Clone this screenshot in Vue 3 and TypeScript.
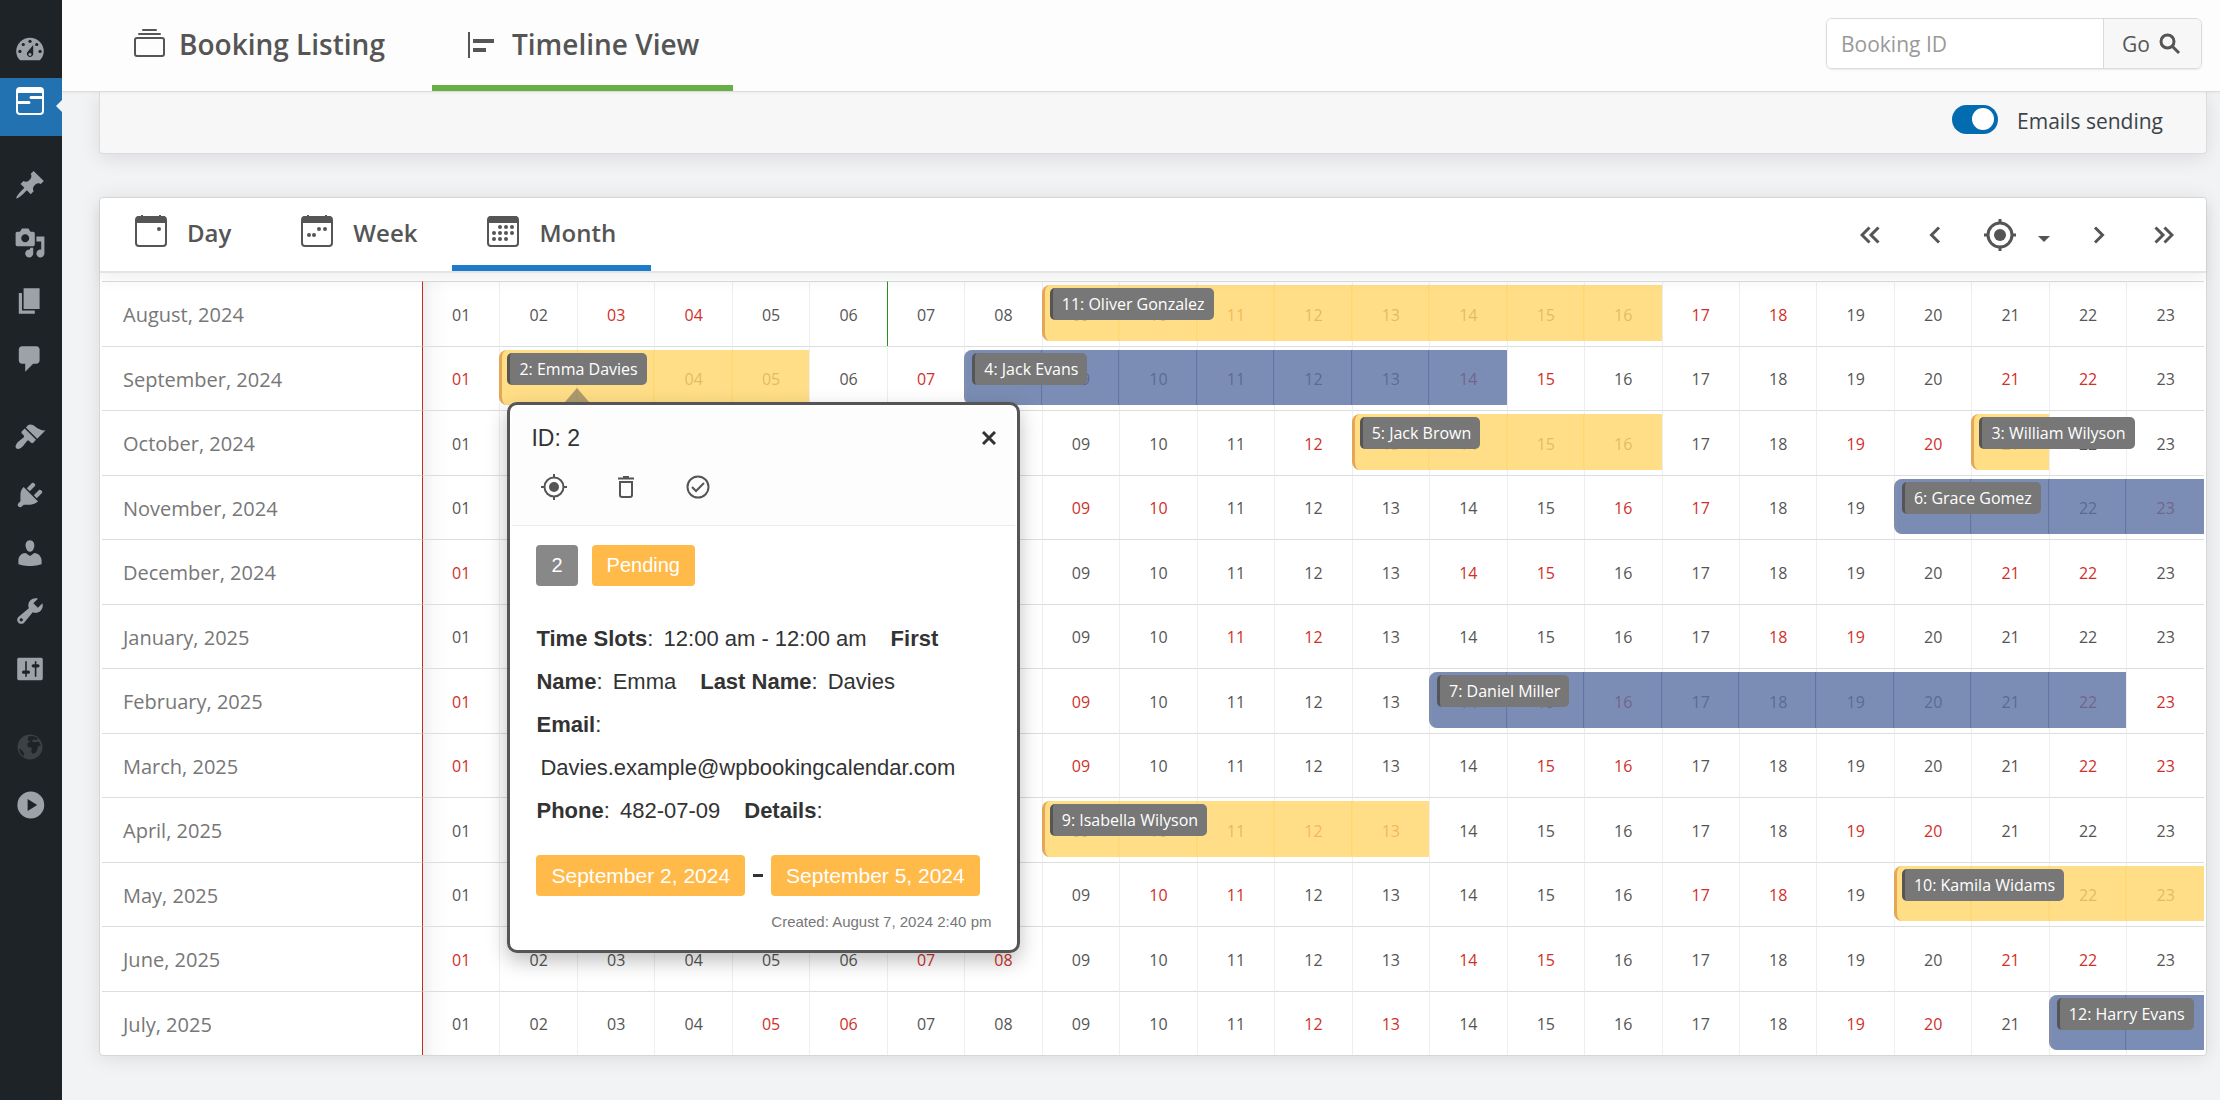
<script setup lang="ts">
import { ref } from 'vue'

interface Booking {
  id: number
  name: string
  year: number
  month: number
  from: number
  to: number
  status: 'pending' | 'approved'
}

interface DayCell {
  day: number
  weekend: boolean
  today: boolean
  booking?: Booking
  first: boolean
}

interface MenuItem {
  label: string
  icon: string
  gap?: boolean
}

const DAYS_SHOWN = 23
const MONTH_NAMES = ['January', 'February', 'March', 'April', 'May', 'June', 'July', 'August', 'September', 'October', 'November', 'December']

const bookings: Booking[] = [
  { id: 11, name: 'Oliver Gonzalez', year: 2024, month: 7, from: 9, to: 16, status: 'pending' },
  { id: 2, name: 'Emma Davies', year: 2024, month: 8, from: 2, to: 5, status: 'pending' },
  { id: 4, name: 'Jack Evans', year: 2024, month: 8, from: 8, to: 14, status: 'approved' },
  { id: 5, name: 'Jack Brown', year: 2024, month: 9, from: 13, to: 16, status: 'pending' },
  { id: 3, name: 'William Wilyson', year: 2024, month: 9, from: 21, to: 21, status: 'pending' },
  { id: 6, name: 'Grace Gomez', year: 2024, month: 10, from: 20, to: 30, status: 'approved' },
  { id: 7, name: 'Daniel Miller', year: 2025, month: 1, from: 14, to: 22, status: 'approved' },
  { id: 9, name: 'Isabella Wilyson', year: 2025, month: 3, from: 9, to: 13, status: 'pending' },
  { id: 10, name: 'Kamila Widams', year: 2025, month: 4, from: 20, to: 30, status: 'pending' },
  { id: 12, name: 'Harry Evans', year: 2025, month: 6, from: 22, to: 30, status: 'approved' },
]

const rows = Array.from({ length: 12 }, (_, i) => {
  const month = (7 + i) % 12
  const year = 2024 + Math.floor((7 + i) / 12)
  const cells: DayCell[] = Array.from({ length: DAYS_SHOWN }, (_, d) => {
    const day = d + 1
    const weekday = new Date(year, month, day).getDay()
    const booking = bookings.find(b => b.year === year && b.month === month && day >= b.from && day <= b.to)
    return {
      day,
      weekend: weekday === 0 || weekday === 6,
      today: year === 2024 && month === 7 && day === 7,
      booking,
      first: booking?.from === day,
    }
  })
  return { label: `${MONTH_NAMES[month]}, ${year}`, cells }
})

const pad = (n: number) => String(n).padStart(2, '0')

const menuTop: MenuItem[] = [
  { label: 'Posts', gap: true, icon: 'M10.44 3.02l1.82-1.82 6.36 6.35-1.83 1.82c-1.05-.68-2.48-.57-3.41.36l-.75.75c-.92.93-1.04 2.35-.35 3.41l-1.83 1.82-2.41-2.41-2.8 2.79c-.42.42-3.38 2.71-3.8 2.29s1.86-3.39 2.28-3.81l2.79-2.79L4.1 9.36l1.83-1.82c1.05.69 2.48.57 3.4-.36l.75-.75c.93-.92 1.05-2.35.36-3.41z' },
  { label: 'Media', icon: 'M13 11V4c0-.55-.45-1-1-1h-1.67L9 1H5L3.67 3H2c-.55 0-1 .45-1 1v7c0 .55.45 1 1 1h10c.55 0 1-.45 1-1zM7 4.5c1.38 0 2.5 1.12 2.5 2.5S8.38 9.5 7 9.5 4.5 8.38 4.5 7 5.62 4.5 7 4.5zM14 6h5v10.5c0 1.38-1.12 2.5-2.5 2.5S14 17.88 14 16.5s1.12-2.5 2.5-2.5c.17 0 .34.02.5.05V9h-3V6zm-4 8.05V13h2v3.5c0 1.38-1.12 2.5-2.5 2.5S7 17.88 7 16.5 8.12 14 9.5 14c.17 0 .34.02.5.05z' },
  { label: 'Pages', icon: 'M6 15V2h10v13H6zm-1 1h8v2H3V5h2v11z' },
  { label: 'Comments', icon: 'M5 2h9c1.1 0 2 .9 2 2v7c0 1.1-.9 2-2 2h-2l-5 5v-5H5c-1.1 0-2-.9-2-2V4c0-1.1.9-2 2-2z' },
  { label: 'Appearance', gap: true, icon: 'M14.48 11.06L7.41 3.99l1.5-1.5c.5-.56 2.3-.47 3.51.32 1.21.8 1.43 1.28 2.91 2.1 1.18.64 2.45 1.26 4.45.85zm-.71.71L6.7 4.7 4.93 6.47c-.39.39-.39 1.02 0 1.41l1.06 1.06c.39.39.39 1.03 0 1.42-.6.6-1.43 1.11-2.21 1.69-.35.26-.7.53-1.01.84C1.43 14.23.4 16.08 1.4 17.07c.99 1 2.84-.03 4.18-1.36.31-.31.58-.66.85-1.02.57-.78 1.08-1.61 1.69-2.21.39-.39 1.02-.39 1.41 0l1.06 1.06c.39.39 1.02.39 1.41 0z' },
  { label: 'Plugins', icon: 'M13.11 4.36L9.87 7.6 8 5.73l3.24-3.24c.35-.34 1.05-.2 1.56.32.52.51.66 1.21.31 1.55zm-8 1.77l.91-1.12 9.01 9.01-1.19.84c-.71.71-2.63 1.16-3.82 1.16H6.14L4.9 17.26c-.59.59-1.54.59-2.12 0-.59-.58-.59-1.53 0-2.12l1.24-1.24v-3.88c0-1.13.4-3.19 1.09-3.89zm7.26 3.97l3.24-3.24c.34-.35 1.04-.21 1.55.31.52.51.66 1.21.31 1.55l-3.24 3.25z' },
  { label: 'Users', icon: 'M10 9.25c-2.27 0-2.73-3.44-2.73-3.44C7 4.02 7.82 2 9.97 2c2.16 0 2.98 2.02 2.71 3.81 0 0-.41 3.44-2.68 3.44zm0 2.57L12.72 10c2.39 0 4.52 2.33 4.52 4.53v2.49s-3.65 1.13-7.24 1.13c-3.65 0-7.24-1.13-7.24-1.13v-2.49c0-2.25 1.94-4.48 4.47-4.48z' },
  { label: 'Tools', icon: 'M16.68 9.77c-1.34 1.34-3.3 1.67-4.95.99l-5.41 6.52c-.99.99-2.59.99-3.58 0s-.99-2.59 0-3.57l6.52-5.42c-.68-1.65-.35-3.61.99-4.95 1.28-1.28 3.12-1.62 4.72-1.06l-2.89 2.89 2.82 2.82 2.86-2.87c.53 1.58.18 3.39-1.08 4.65zM3.81 16.21c.4.39 1.04.39 1.43 0 .4-.4.4-1.04 0-1.43-.39-.4-1.03-.4-1.43 0-.39.39-.39 1.03 0 1.43z' },
  { label: 'Settings', icon: 'M18 16V4c0-.55-.45-1-1-1H3c-.55 0-1 .45-1 1v12c0 .55.45 1 1 1h14c.55 0 1-.45 1-1zM8 11h1c.55 0 1 .45 1 1s-.45 1-1 1H8v1.5c0 .28-.22.5-.5.5s-.5-.22-.5-.5V13H6c-.55 0-1-.45-1-1s.45-1 1-1h1V5.5c0-.28.22-.5.5-.5s.5.22.5.5V11zm5-2h-1c-.55 0-1-.45-1-1s.45-1 1-1h1V5.5c0-.28.22-.5.5-.5s.5.22.5.5V7h1c.55 0 1 .45 1 1s-.45 1-1 1h-1v5.5c0 .28-.22.5-.5.5s-.5-.22-.5-.5V9z' },
]

const calendarDots = {
  day: [[24, 14]],
  week: [[8, 20], [13, 20], [18, 14], [24, 14]],
  month: [[13, 12], [19, 12], [25, 12], [7, 18], [13, 18], [19, 18], [25, 18], [7, 24], [13, 24], [19, 24]],
}

const views = [
  { key: 'day', label: 'Day' },
  { key: 'week', label: 'Week' },
  { key: 'month', label: 'Month' },
] as const

const activeView = ref<'day' | 'week' | 'month'>('month')
const openBooking = ref<number | null>(2)
const emails = ref(true)
const bookingId = ref('')
</script>

<template>
  <div class="app">
    <nav class="sidebar" aria-label="Admin menu">
      <a href="#" class="item" aria-label="Dashboard">
        <svg viewBox="0 0 20 20" class="icon">
          <path d="M3.8 17h12.4A8.6 8.6 0 0 0 18.6 11.5a8.6 8.6 0 0 0-17.2 0c0 2.2.9 4.200 2.400 5.500z" />
          <g class="hole">
            <circle cx="10" cy="5.200" r="1" /><circle cx="5.800" cy="7.200" r="1" /><circle cx="14.200" cy="7.200" r="1" />
            <circle cx="3.700" cy="11.500" r="1" /><circle cx="16.300" cy="11.500" r="1" />
            <path d="M12 7.500v5.800a2 2 0 1 1-3.600-1.500z" />
          </g>
          <circle cx="10" cy="13.400" r=".9" />
        </svg>
      </a>
      <a href="#" class="item current" aria-label="Booking Calendar">
        <svg viewBox="0 0 28 28" class="logo">
          <rect class="line" x="1" y="1" width="26" height="26" rx="3" />
          <path d="M1 3a2 2 0 0 1 2-2h22a2 2 0 0 1 2 2v3H1z" />
          <path d="M15 10.500h12M1 15.500h12" stroke="currentColor" stroke-width="3" stroke-linecap="round" />
        </svg>
      </a>
      <a v-for="item in menuTop" :key="item.label" href="#" class="item" :class="{ gap: item.gap }" :aria-label="item.label">
        <svg viewBox="0 0 20 20" class="icon"><path :d="item.icon" /></svg>
      </a>
      <a href="#" class="item gap dim" aria-label="Site">
        <svg viewBox="0 0 20 20" class="icon">
          <circle cx="10" cy="10" r="7.800" />
          <path class="hole" d="M9 3.500c2-.8 4.500-.3 6 1.200l-1 1-2-.4-1 1.200 2 .6 2.500-.4 1.400 2.300-1.700.6-1.200 3.300-2 1.700-1.200-1.500.3-2.500-2.600-.8-.2-2 2-1.400-1.800-.6zM3 11l2 1 1.500 2.300-.8 1.500A8 8 0 0 1 3 11z" />
        </svg>
      </a>
      <a href="#" class="item" aria-label="Collapse menu">
        <svg viewBox="0 0 20 20" class="icon play">
          <circle cx="10.500" cy="10" r="8.400" /><path class="hole" d="M8.500 6.200v7.600l6-3.800z" />
        </svg>
      </a>
    </nav>

    <div class="page">
      <header class="topbar">
        <nav class="toptabs" aria-label="Sections">
          <a href="#" class="toptab">
            <svg width="34" height="34" viewBox="0 0 34 34" class="stroke thin">
              <rect x="2" y="11" width="29" height="18" rx="2" /><path d="M6 7h21M10 3h13" stroke-linecap="round" />
            </svg>
            <span>Booking Listing</span>
          </a>
          <a href="#" class="toptab active">
            <svg width="34" height="34" viewBox="0 0 34 34">
              <path d="M2 5h2v26H2zM7 12h21v4H7zM7 21h13v4H7z" />
            </svg>
            <span>Timeline View</span>
          </a>
        </nav>
        <form class="search" @submit.prevent>
          <input v-model="bookingId" type="text" placeholder="Booking ID" aria-label="Booking ID" />
          <button type="submit">
            Go
            <svg width="22" height="22" viewBox="0 0 22 22" class="stroke">
              <circle cx="8.500" cy="8.500" r="6.500" /><path d="M13 13l7 7" />
            </svg>
          </button>
        </form>
      </header>

      <main class="content">
        <section class="options">
          <label class="switch">
            <input v-model="emails" type="checkbox" />
            <span>Emails sending</span>
          </label>
        </section>

        <section class="timeline">
          <div class="toolbar">
            <div class="views">
              <button v-for="v in views" :key="v.key" type="button" class="view" :class="{ active: activeView === v.key }" @click="activeView = v.key">
                <svg width="32" height="32" viewBox="0 0 32 32">
                  <rect class="line" x="1" y="2" width="30" height="29" rx="3" />
                  <path d="M1 4a3 3 0 0 1 3-3h24a3 3 0 0 1 3 3v4H1z" />
                  <path v-if="v.key !== 'month'" d="M6 0h2v2H6zM24 0h2v2h-2z" />
                  <circle v-for="(dot, i) in calendarDots[v.key]" :key="i" :cx="dot[0]" :cy="dot[1]" r="2" />
                </svg>
                <span>{{ v.label }}</span>
              </button>
            </div>
            <div class="pager">
              <button type="button" aria-label="Back far">
                <svg width="20" height="18" viewBox="0 0 20 18" class="stroke"><path d="M9.500 1.500L2 9l7.500 7.500M18.500 1.500L11 9l7.500 7.500" /></svg>
              </button>
              <button type="button" aria-label="Back">
                <svg width="12" height="18" viewBox="0 0 12 18" class="stroke"><path d="M10 1.500L2.500 9l7.500 7.500" /></svg>
              </button>
              <button type="button" aria-label="Today">
                <svg width="32" height="32" viewBox="0 0 32 32" class="stroke">
                  <circle cx="16" cy="16" r="12" /><path d="M16 0v4M16 28v4M0 16h4M28 16h4" /><circle class="dot" cx="16" cy="16" r="6" />
                </svg>
              </button>
              <button type="button" class="caret" aria-label="Choose date">
                <svg width="12" height="6" viewBox="0 0 12 6"><path d="M0 0h12L6 6z" /></svg>
              </button>
              <button type="button" aria-label="Forward">
                <svg width="12" height="18" viewBox="0 0 12 18" class="stroke"><path d="M2 1.500L9.500 9 2 16.500" /></svg>
              </button>
              <button type="button" aria-label="Forward far">
                <svg width="20" height="18" viewBox="0 0 20 18" class="stroke"><path d="M1.500 1.500L9 9l-7.500 7.500M10.500 1.500L18 9l-7.500 7.500" /></svg>
              </button>
            </div>
          </div>

          <table class="grid">
            <colgroup>
              <col class="month-col" />
              <col v-for="n in DAYS_SHOWN" :key="n" />
            </colgroup>
            <tbody>
              <tr v-for="row in rows" :key="row.label">
                <th scope="row">{{ row.label }}</th>
                <td v-for="cell in row.cells" :key="cell.day" :class="{ weekend: cell.weekend, today: cell.today }">
                  {{ pad(cell.day) }}
                  <template v-if="cell.booking">
                    <div class="bar" :class="[cell.booking.status, { first: cell.first }]"></div>
                    <button v-if="cell.first" type="button" class="chip" @click="openBooking = cell.booking.id">
                      {{ cell.booking.id }}: {{ cell.booking.name }}
                    </button>
                  </template>
                  <div v-if="cell.first && cell.booking?.id === 2 && openBooking === 2" class="popup" role="dialog" aria-label="Booking 2">
                    <div class="popup-head">
                      <div class="popup-title">
                        <span>ID: 2</span>
                        <button type="button" aria-label="Close" @click="openBooking = null">
                          <svg width="14" height="14" viewBox="0 0 14 14" class="stroke"><path d="M1 1l12 12M13 1L1 13" /></svg>
                        </button>
                      </div>
                      <div class="popup-actions">
                        <button type="button" aria-label="Locate">
                          <svg width="26" height="26" viewBox="0 0 26 26" class="stroke thin">
                            <circle cx="13" cy="13" r="9.500" /><path d="M13 0v4M13 22v4M0 13h4M22 13h4" /><circle class="dot" cx="13" cy="13" r="5" />
                          </svg>
                        </button>
                        <button type="button" aria-label="Delete">
                          <svg width="16" height="22" viewBox="0 0 16 22" class="stroke thin">
                            <path d="M2 6v13a2 2 0 0 0 2 2h8a2 2 0 0 0 2-2V6z" /><path d="M0 2.500h16M5 1h6" />
                          </svg>
                        </button>
                        <button type="button" aria-label="Approve">
                          <svg width="24" height="24" viewBox="0 0 24 24" class="stroke thin">
                            <circle cx="12" cy="12" r="10.500" /><path d="M6 12l4 4 8-8" />
                          </svg>
                        </button>
                      </div>
                    </div>
                    <div class="popup-body">
                      <div class="labels">
                        <span class="badge gray">2</span>
                        <span class="badge">Pending</span>
                      </div>
                      <p class="fields">
                        <b>Time Slots</b>: <span class="val">12:00 am - 12:00 am</span>
                        <b>First<br />Name</b>: <span class="val">Emma</span>
                        <b>Last Name</b>: <span class="val">Davies</span><br />
                        <b>Email</b>:<br />
                        <span class="val">Davies.example@wpbookingcalendar.com</span><br />
                        <b>Phone</b>: <span class="val">482-07-09</span>
                        <b>Details</b>:
                      </p>
                      <div class="dates">
                        <span class="badge date">September 2, 2024</span>
                        <span class="dash"></span>
                        <span class="badge date">September 5, 2024</span>
                      </div>
                      <p class="created">Created: August 7, 2024 2:40 pm</p>
                    </div>
                  </div>
                </td>
              </tr>
            </tbody>
          </table>
        </section>
      </main>
    </div>
  </div>
</template>

<style>
body {
  background: #f2f3f5;
}
</style>

<style scoped>
* {
  box-sizing: border-box;
}
.app {
  display: flex;
  min-height: 100vh;
  font-family: 'Open Sans', 'Noto Sans', sans-serif;
  color: #555;
}
button {
  font: inherit;
  color: inherit;
  background: none;
  border: 0;
  padding: 0;
  cursor: pointer;
}
a {
  color: inherit;
  text-decoration: none;
}
svg {
  display: block;
  fill: currentColor;
  flex: none;
}
.stroke {
  fill: none;
  stroke: currentColor;
  stroke-width: 3;
}
.stroke.thin,
.line {
  stroke-width: 2;
}
.line {
  fill: none;
  stroke: currentColor;
}
.stroke .dot {
  fill: currentColor;
  stroke: none;
}

/* admin menu */
.sidebar {
  flex: none;
  width: 62px;
  padding-top: 20px;
  background: #1d2327;
  color: #9ca2a7;
}
.item {
  display: flex;
  align-items: center;
  justify-content: center;
  height: 58px;
  padding-right: 2px;
}
.item.gap {
  margin-top: 20px;
}
.item .icon {
  width: 32px;
  height: 32px;
}
.item .hole {
  fill: #1d2327;
}
.item.current {
  position: relative;
  color: #fff;
  background: #2271b1;
  padding-bottom: 12px;
}
.item.current::after {
  content: '';
  position: absolute;
  right: 0;
  top: 22px;
  border: 6px solid transparent;
  border-right-color: #f2f3f5;
  border-left: 0;
}
.logo {
  width: 28px;
  height: 28px;
}
.item.dim {
  color: #3e4143;
}

/* top bar */
.page {
  flex: 1;
  min-width: 0;
}
.topbar {
  position: relative;
  z-index: 1;
  display: flex;
  justify-content: space-between;
  align-items: center;
  height: 92px;
  padding: 0 18px 0 37px;
  background: #fdfdfd;
  border-bottom: 1px solid #dcdcde;
  box-shadow: 0 1px 3px rgba(0, 0, 0, 0.05);
}
.toptabs {
  display: flex;
  gap: 13px;
  height: 91px;
}
.toptab {
  display: flex;
  align-items: center;
  gap: 12px;
  padding: 2px 34px 0;
  font-size: 28px;
  font-weight: 600;
  border-bottom: 6px solid transparent;
  white-space: nowrap;
}
.toptab.active {
  border-bottom-color: #64b044;
}
.search {
  display: flex;
  width: 376px;
  height: 51px;
  margin-bottom: 4px;
  font-size: 21px;
  border: 1px solid #d9dadc;
  border-radius: 6px;
  box-shadow: 0 1px 2px rgba(0, 0, 0, 0.08);
  overflow: hidden;
}
.search input {
  flex: 1;
  min-width: 0;
  padding: 0 14px;
  font: inherit;
  color: #555;
  background: #fff;
  border: 0;
}
.search input::placeholder {
  color: #999;
}
.search button {
  display: flex;
  align-items: center;
  gap: 9px;
  padding: 0 20px 0 18px;
  background: #f7f7f7;
  border-left: 1px solid #d9dadc;
}

/* panels */
.content {
  padding: 0 13px 45px 37px;
}
.options {
  display: flex;
  justify-content: flex-end;
  height: 62px;
  padding: 11px 43px 0 0;
  background: #f7f7f7;
  border: 1px solid #dcdcde;
  border-top: 0;
  border-radius: 0 0 4px 4px;
  box-shadow: 0 4px 20px rgba(0, 0, 0, 0.1);
}
.switch {
  display: flex;
  align-items: center;
  gap: 19px;
  height: 36px;
  font-size: 21px;
  color: #3c434a;
}
.switch input {
  appearance: none;
  width: 46px;
  height: 29px;
  margin: 0 0 4px;
  padding: 3px 4px;
  border-radius: 15px;
  background: #999;
}
.switch input:checked {
  background: #036cb0;
}
.switch input::before {
  content: '';
  display: block;
  width: 22px;
  height: 22px;
  border-radius: 50%;
  background: #fff;
}
.switch input:checked::before {
  margin-left: auto;
}
.timeline {
  margin-top: 43px;
  background: #fff;
  border: 1px solid #d5d6d8;
  border-radius: 4px;
  box-shadow: 0 2px 20px rgba(0, 0, 0, 0.1);
}
.toolbar {
  position: relative;
  z-index: 1;
  display: flex;
  justify-content: space-between;
  height: 75px;
  padding-right: 10px;
  background: #fff;
  border-bottom: 2px solid #e3e4e5;
  border-radius: 4px 4px 0 0;
  box-shadow: 0 8px 14px rgba(0, 0, 0, 0.05);
}
.views {
  display: flex;
}
.view {
  display: flex;
  align-items: center;
  gap: 20px;
  padding: 2px 35px 0;
  font-size: 24px;
  font-weight: 600;
  border-bottom: 6px solid transparent;
}
.view svg {
  margin-bottom: 4px;
}
.view.active {
  border-bottom-color: #1e7acb;
}
.pager {
  display: flex;
}
.pager button {
  display: flex;
  align-items: center;
  justify-content: center;
  width: 65px;
}
.pager .caret {
  width: 24px;
  margin-right: 10px;
  padding-top: 8px;
}

/* month rows */
.grid {
  width: calc(100% - 4px);
  height: 774px;
  margin: 8px 2px 0;
  table-layout: fixed;
  border-collapse: separate;
  border-spacing: 0;
}
.month-col {
  width: 320px;
}
.grid th,
.grid td {
  padding: 2px 0 0;
  border-top: 1px solid #dcddde;
}
.grid th {
  padding-left: 21px;
  font-size: 20px;
  font-weight: 400;
  color: #777;
  text-align: left;
}
.grid td {
  position: relative;
  font-size: 16px;
  text-align: center;
  border-left: 1px solid #eeeeef;
}
.grid th + td {
  border-left-color: #c52b20;
  background: linear-gradient(to right, #efefef, #fafafa 10px, #fff 26px);
}
.grid td.weekend {
  color: #d0302a;
}
.grid td.today {
  border-left-color: #1c961c;
}
.bar {
  position: absolute;
  top: 3px;
  bottom: 5px;
  left: -2px;
  right: 0;
  opacity: 0.8;
}
.bar.first {
  left: -1px;
  border-left: 3px solid;
  border-radius: 8px 0 0 8px;
}
.bar.pending {
  background: #ffd669;
  border-color: #e2922f;
}
.bar.approved {
  background: #5a70a1;
  border-color: #62749a;
}
.chip {
  position: absolute;
  z-index: 2;
  top: 6px;
  left: 7px;
  height: 32px;
  padding: 0 9px;
  font-size: 16px;
  line-height: 32px;
  color: #fff;
  white-space: nowrap;
  background: #777;
  border-left: 3px solid #555;
  border-radius: 5px;
}

/* booking details */
.popup {
  position: absolute;
  z-index: 3;
  top: 55px;
  left: 7px;
  width: 513px;
  padding: 2px;
  font-family: 'Liberation Sans', Arial, sans-serif;
  font-size: 22px;
  color: #333;
  text-align: left;
  background: #fff;
  border: 3px solid #555;
  border-radius: 10px;
  box-shadow: 0 8px 20px rgba(0, 0, 0, 0.25);
}
.popup::before {
  content: '';
  position: absolute;
  top: -17px;
  left: 55px;
  border: 12px solid transparent;
  border-top: 0;
  border-bottom: 14px solid rgba(85, 85, 85, 0.5);
}
.popup-head {
  height: 119px;
  padding: 15px 19px 0;
  background: #fdfdfd;
  border-bottom: 1px solid #ebebeb;
  border-radius: 6px 6px 0 0;
}
.popup-title {
  display: flex;
  justify-content: space-between;
  align-items: center;
  font-size: 23px;
  line-height: 32px;
}
.popup-actions {
  display: flex;
  margin-top: 10px;
  color: #555;
}
.popup-actions button {
  display: flex;
  justify-content: center;
  align-items: center;
  width: 46px;
  height: 46px;
  margin-right: 26px;
}
.popup-body {
  padding: 19px 24px 17px;
}
.labels,
.dates {
  display: flex;
  align-items: center;
}
.labels {
  gap: 14px;
}
.badge {
  padding: 0 15px;
  font-size: 20px;
  line-height: 41px;
  color: #fff;
  background: #ffba49;
  border-radius: 4px;
}
.badge.gray {
  background: #888;
}
.badge.date {
  font-size: 21px;
}
.fields {
  margin: 31px 0 23px;
  line-height: 43px;
  white-space: nowrap;
}
.val {
  margin: 0 24px 0 4px;
}
.dash {
  width: 10px;
  height: 3px;
  margin: 0 8px;
  background: #333;
}
.created {
  margin: 17px 0 0;
  font-size: 15px;
  line-height: 18px;
  color: #777;
  text-align: right;
}
</style>
